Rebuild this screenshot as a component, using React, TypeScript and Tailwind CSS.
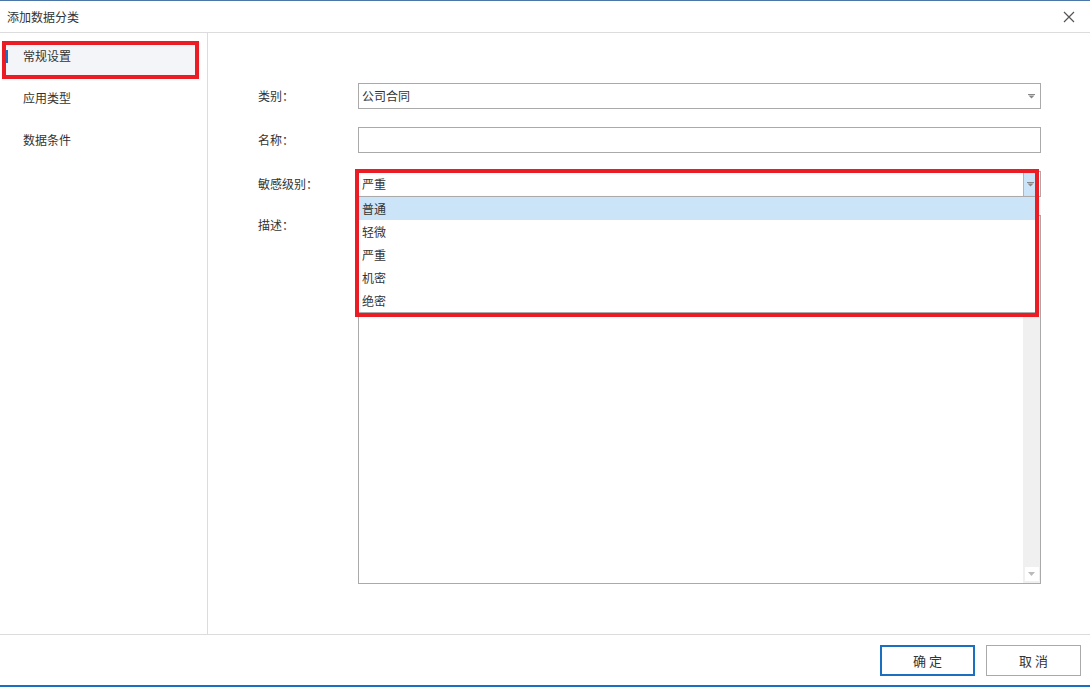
import React from 'react';

const Arrow = () => (
  <svg width="7" height="5" viewBox="0 0 7 5" className="block">
    <rect x="0" y="0" width="7" height="1" fill="#888" />
    <path d="M0.5 1.5 L6.5 1.5 L3.5 4.5 Z" fill="#888" />
  </svg>
);

const options = ['普通', '轻微', '严重', '机密', '绝密'];

export default function App() {
  return (
    <div className="w-[1090px] h-[687px] flex flex-col bg-white border-t border-[#4a76a8] font-['Noto_Sans_CJK_SC','Microsoft_YaHei',sans-serif] text-[12px] text-[#333] overflow-hidden">
      {/* title bar */}
      <div className="h-[32px] shrink-0 flex items-center justify-between pl-[7px] pr-[15px] border-b border-[#dcdcdc]">
        <span>添加数据分类</span>
        <svg width="12" height="12" viewBox="0 0 12 12">
          <path d="M1 1 L11 11 M11 1 L1 11" stroke="#555" strokeWidth="1.2" />
        </svg>
      </div>

      {/* body */}
      <div className="h-[601px] shrink-0 flex">
        <div className="w-[208px] shrink-0 border-r border-[#dcdcdc] pt-[8px] pl-[2px] pr-[7px] flex flex-col">
          <div className="relative h-[37px] bg-[#f4f5f9] flex items-center pl-[21px]">
            <span className="absolute left-[4px] top-[9px] w-[2px] h-[13px] bg-[#1a6fc0]" />
            <span className="-mt-[8px]">常规设置</span>
            <div className="absolute left-0 top-0 w-[197px] h-[38px] border-[4px] border-[#ec1c24]" />
          </div>
          <div className="h-[36px] mt-[2px] flex items-center pl-[21px]">应用类型</div>
          <div className="h-[36px] mt-[6px] flex items-center pl-[21px]">数据条件</div>
        </div>

        <div className="flex-1 pt-[50px] pl-[50px] pr-[49px] flex flex-col gap-[18px]">
          <div className="flex items-center">
            <div className="w-[100px] shrink-0">类别：</div>
            <div className="flex-1 h-[26px] border border-[#aaa] flex items-center justify-between pl-[3px] pr-[5px]">
              <span>公司合同</span>
              <Arrow />
            </div>
          </div>
          <div className="flex items-center">
            <div className="w-[100px] shrink-0">名称：</div>
            <div className="flex-1 h-[26px] border border-[#aaa]" />
          </div>
          <div className="flex items-center relative z-10">
            <div className="w-[100px] shrink-0">敏感级别：</div>
            <div className="relative flex-1 h-[26px] border border-[#aaa] flex items-center justify-between pl-[3px]">
              <span>严重</span>
              <div className="h-full w-[13px] mr-[4px] bg-[#cce4f7] border-l border-[#9bbbd9] flex items-center justify-center">
                <Arrow />
              </div>
              <div className="absolute left-[-1px] right-[4px] top-[24px] bg-white border border-[#aaa] shadow-[2px_2px_3px_rgba(0,0,0,0.25)]">
                {options.map((o, i) => (
                  <div key={o} className={`h-[23px] flex items-center pl-[3px] ${i === 0 ? 'bg-[#cce4f7]' : ''}`}>
                    {o}
                  </div>
                ))}
              </div>
              <div className="absolute left-[-4px] top-[-3px] w-[684px] h-[148px] border-[4px] border-[#ec1c24]" />
            </div>
          </div>
          <div className="flex items-start">
            <div className="w-[100px] shrink-0 pt-[1px] leading-[18px]">描述：</div>
            <div className="flex-1 h-[369px] border border-[#aaa] flex justify-end">
              <div className="w-[17px] h-full bg-[#f0f0f0] flex flex-col justify-end items-center pb-[2px]">
                <div className="w-[14px] h-[14px] bg-white flex items-center justify-center">
                  <svg width="7" height="4" viewBox="0 0 7 4">
                    <path d="M0 0 L7 0 L3.5 4 Z" fill="#bbb" />
                  </svg>
                </div>
              </div>
            </div>
          </div>
        </div>
      </div>

      {/* footer */}
      <div className="h-[51px] shrink-0 border-t border-[#dcdcdc] flex justify-end items-start pt-[10px] pr-[9px] gap-[11px]">
        <button className="w-[95px] h-[31px] border-2 border-[#1a6fc0] bg-white text-[13px] text-[#333] tracking-[3px] pl-[3px]">确定</button>
        <button className="w-[95px] h-[31px] border border-[#aaa] bg-white text-[13px] text-[#333] tracking-[3px] pl-[3px]">取消</button>
      </div>
      <div className="h-[2px] shrink-0 bg-[#1a6fc0]" />
    </div>
  );
}
